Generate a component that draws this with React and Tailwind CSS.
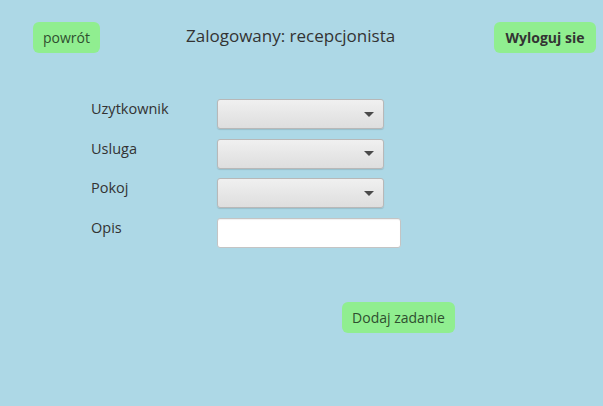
const FIELDS = ['Uzytkownik', 'Usluga', 'Pokoj']

function Combo() {
  return (
    <div className="flex h-[30px] w-[167px] items-center justify-end rounded-[3px] border border-[#b8b8b8] bg-gradient-to-b from-[#f0f0f0] to-[#dedede] pr-[9px] shadow-[0_1px_1px_rgba(0,0,0,0.12)]">
      <svg width="10" height="5" viewBox="0 0 10 5">
        <path d="M0 0 H10 L5 5 Z" fill="#4a4a4a" />
      </svg>
    </div>
  )
}

export default function App() {
  return (
    <div
      className="h-[406px] w-[603px] bg-[#add8e6] text-[#333333]"
      style={{ fontFamily: '"Open Sans", "Noto Sans", sans-serif' }}
    >
      {/* Header */}
      <div className="flex items-center pl-[33px] pr-[7px] pt-[22px]">
        <button className="h-[31px] w-[67px] rounded-[6px] bg-[#90ee90] text-[14px] text-[#2f4f2f]">
          powrót
        </button>
        <span className="ml-[86px] -mt-[4px] text-[17px]">Zalogowany: recepcjonista</span>
        <button className="ml-auto h-[31px] w-[102px] rounded-[6px] bg-[#90ee90] text-[14px] font-bold text-[#333333]">
          Wyloguj sie
        </button>
      </div>

      {/* Form */}
      <div className="ml-[91px] mt-[46px] flex flex-col gap-[9.5px]">
        {FIELDS.map((f) => (
          <div key={f} className="flex items-start">
            <span className="w-[126px] text-[14.5px] leading-5">{f}</span>
            <Combo />
          </div>
        ))}
        <div className="flex items-start">
          <span className="w-[126px] text-[14.5px] leading-5">Opis</span>
          <div className="h-[30px] w-[184px] rounded-[3px] border border-[#c4c4c4] bg-white shadow-[inset_0_1px_1px_rgba(0,0,0,0.06)]" />
        </div>
      </div>

      <div className="ml-[342px] mt-[54px]">
        <button className="h-[31px] w-[113px] rounded-[6px] bg-[#90ee90] text-[14px] text-[#2f4f2f]">
          Dodaj zadanie
        </button>
      </div>
    </div>
  )
}
